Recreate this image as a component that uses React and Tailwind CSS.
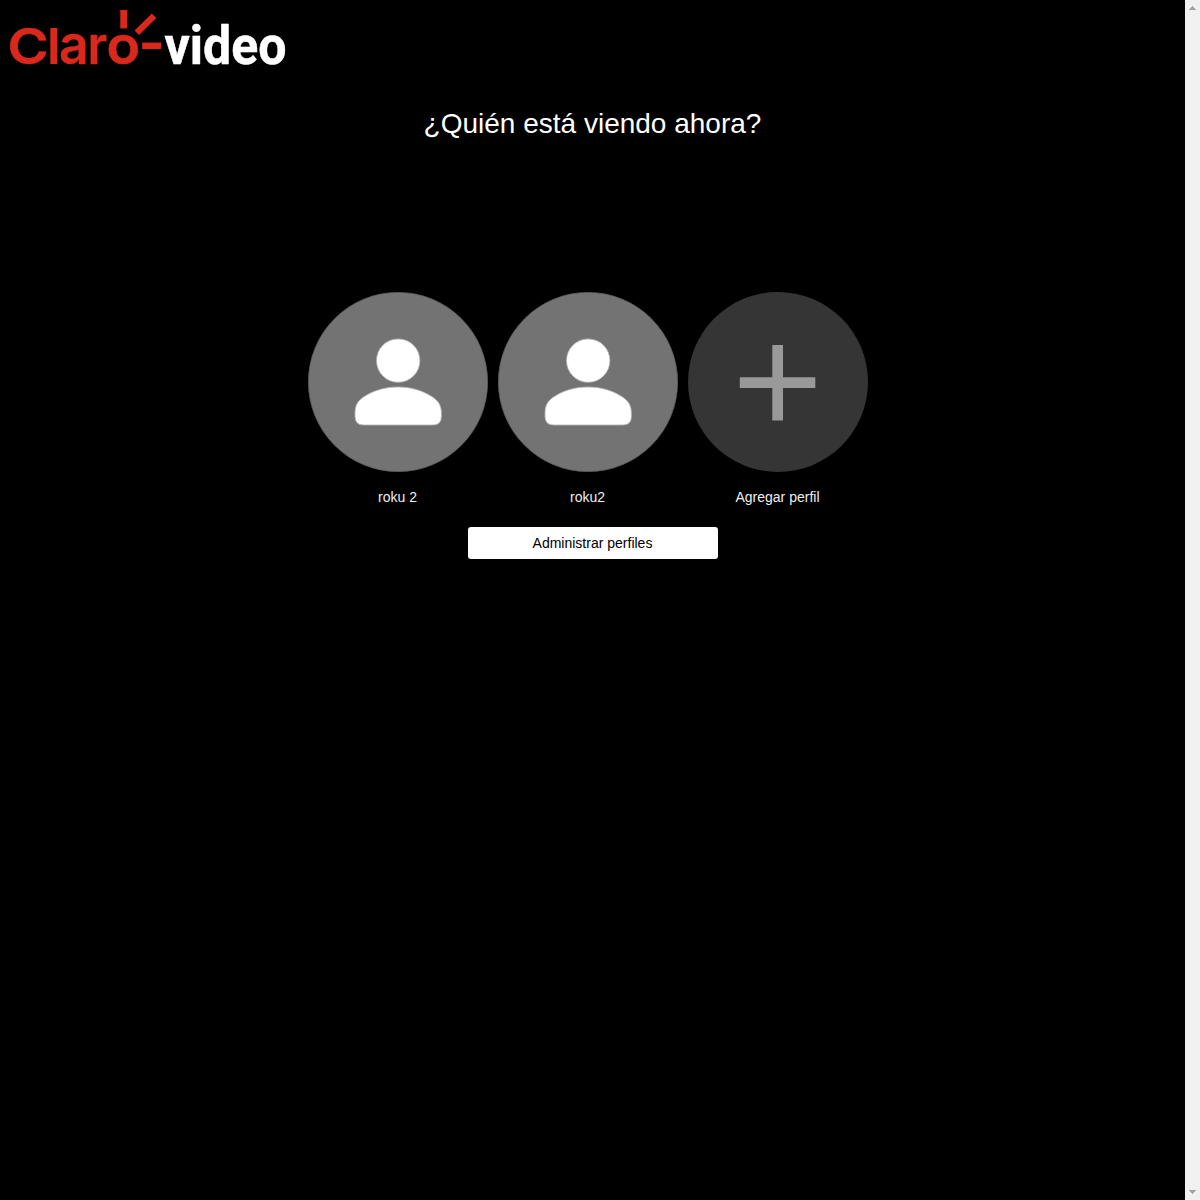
import React from "react";

function Logo() {
  return (
    <svg width="300" height="90" viewBox="0 0 300 90" role="img" aria-label="Claro video" className="block overflow-visible">
      <g fill="#da291c" fontFamily="Inter, sans-serif" fontWeight="600">
        <text transform="translate(7.6 64) scale(1.12 1)" fontSize="50" stroke="#da291c" strokeWidth="0.5">C</text>
        <text transform="translate(46.8 64) scale(1.08 1)" fontSize="49.5">l</text>
        <text transform="translate(59 64) scale(0.96 1)" fontSize="54" stroke="#da291c" strokeWidth="0.3">a</text>
        <text transform="translate(87.6 64) scale(0.93 1)" fontSize="53.5" stroke="#da291c" strokeWidth="0.3">r</text>
        <text transform="translate(106.4 64) scale(1.03 1)" fontSize="53.5" stroke="#da291c" strokeWidth="0.6">o</text>
        <rect x="120.3" y="10" width="6.8" height="18.4" />
        <path d="M136.800 32.800L154 15.800" fill="none" stroke="#da291c" strokeWidth="6.3" />
        <rect x="142.2" y="42.6" width="18.8" height="6.4" />
      </g>
      <text transform="translate(164.5 64) scale(0.935 1)" fontSize="53.5" fontWeight="700" fontFamily="Roboto, sans-serif" fill="#fff" stroke="#fff" strokeWidth="0.5">video</text>
    </svg>
  );
}

function PersonAvatar() {
  return (
    <svg width="180" height="180" viewBox="0 0 180 180" className="block">
      <circle cx="90" cy="90" r="89.6" fill="#737373" stroke="#606060" strokeWidth="0.8" />
      <g fill="#fff" stroke="#b5b5b5" strokeWidth="0.8">
        <circle cx="90.2" cy="68.6" r="21.7" />
        <path d="M47 121C47 111 52 107 58 103.500C67 98 78 95 90 95S113 98 122 103.500C128 107 133.400 111 133.400 121V124.500Q133.400 133 125 133H55.500Q47 133 47 124.500Z" />
      </g>
    </svg>
  );
}

function AddAvatar() {
  return (
    <svg width="180" height="180" viewBox="0 0 180 180" className="block">
      <circle cx="90" cy="90" r="90" fill="#353535" />
      <path d="M84.300 53H95V85.300H127.300V96H95V128.500H84.300V96H51.800V85.300H84.300Z" fill="#999" />
    </svg>
  );
}

function Profile({ name, children }) {
  return (
    <button className="flex w-[180px] flex-col items-center">
      {children}
      <span className="mt-4 mr-px text-sm leading-[18px] text-[#eee]">{name}</span>
    </button>
  );
}

function Scrollbar() {
  return (
    <div className="flex w-[15px] shrink-0 flex-col justify-between bg-[#f1f1f1]">
      <svg width="15" height="15" shapeRendering="crispEdges" fill="#a3a3a3">
        <path d="M7 6h1v1h1v1h1v1h1v1H4V9h1V8h1V7h1z" />
      </svg>
      <svg width="15" height="15" shapeRendering="crispEdges" fill="#a3a3a3">
        <path d="M4 5h7v1h-1v1H9v1H8v1H7V8H6V7H5V6H4z" />
      </svg>
    </div>
  );
}

export default function App() {
  return (
    <div className="flex h-[1200px] w-[1200px] bg-black font-['Liberation_Sans',Arial,sans-serif] text-white">
      <main className="flex min-w-0 flex-1 flex-col">
        <header className="h-[90px]">
          <Logo />
        </header>
        <h1 className="mt-[18px] text-center text-[28px] leading-8">¿Quién está viendo ahora?</h1>
        <section className="mt-[152px] flex gap-[10px] pl-[308px]">
          <Profile name="roku 2"><PersonAvatar /></Profile>
          <Profile name="roku2"><PersonAvatar /></Profile>
          <Profile name="Agregar perfil"><AddAvatar /></Profile>
        </section>
        <button className="mt-[21px] ml-[468px] h-8 w-[250px] rounded-[3px] bg-white pr-px text-sm text-black">
          Administrar perfiles
        </button>
      </main>
      <Scrollbar />
    </div>
  );
}
